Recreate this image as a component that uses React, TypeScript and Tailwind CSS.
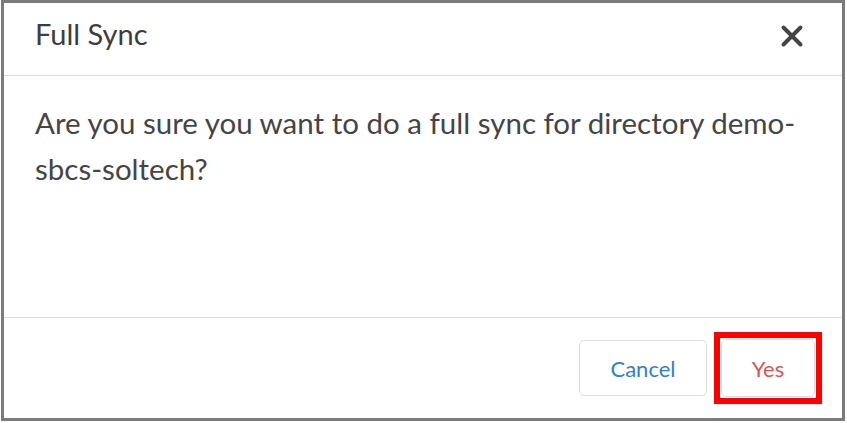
import { X } from 'lucide-react';

// Full sync confirmation dialog
export default function App() {
  return (
    <div className="w-[847px] h-[423px] bg-white" style={{ fontFamily: 'Lato, "Open Sans", sans-serif' }}>
      <div className="ml-[1px] w-[844px] h-[421px] border-[3px] border-[#7b7b7b] flex flex-col">
        <header className="h-[73px] flex items-center justify-between pl-[31px] pr-[33px] pb-[11px] border-b border-[#dcdcdc] shrink-0">
          <h1 className="text-[29px] text-[#3d3d3d] leading-none">Full Sync</h1>
          <button className="text-[#454545] mt-[5px]">
            <X size={34} strokeWidth={2.8} />
          </button>
        </header>

        <main className="flex-1 pl-[31px] pr-[40px] pt-[24px]">
          <p className="text-[29.5px] leading-[46px] text-[#454545]">
            Are you sure you want to do a full sync for directory demo-sbcs-soltech?
          </p>
        </main>

        <footer className="h-[101px] border-t border-[#dcdcdc] flex items-center justify-end gap-[7px] pr-[20px] shrink-0">
          <button className="w-[128px] h-[56px] rounded-[5px] border border-[#dddddd] bg-white text-[22px] text-[#2f80d1]">
            Cancel
          </button>
          <div className="p-[1px] border-[6px] border-[#ff0000]">
            <button className="w-[94px] h-[58px] rounded-[5px] border border-[#dddddd] bg-white text-[22px] text-[#e05257]">
              Yes
            </button>
          </div>
        </footer>
      </div>
    </div>
  );
}
